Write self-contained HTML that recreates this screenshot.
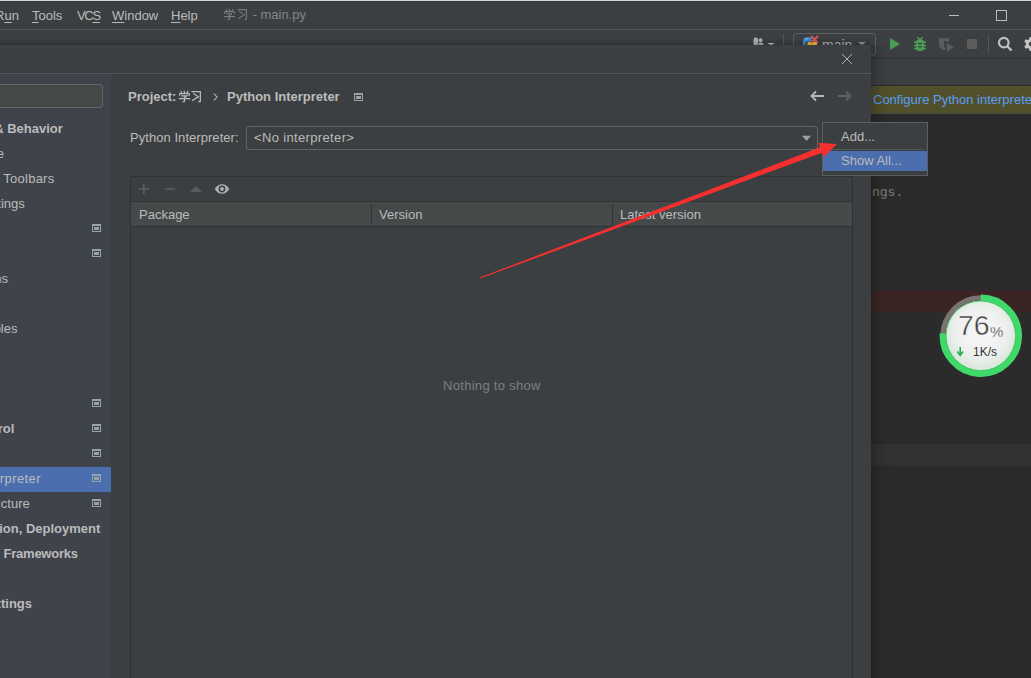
<!DOCTYPE html>
<html><head><meta charset="utf-8">
<style>
*{margin:0;padding:0;box-sizing:border-box}
html,body{width:1031px;height:678px;overflow:hidden;background:#3c3f41;font-family:"Liberation Sans",sans-serif;font-size:13px;color:#bbbbbb}
.a{position:absolute}
.t{position:absolute;white-space:nowrap;line-height:16px;height:16px}
.r{position:absolute;white-space:nowrap;line-height:16px;height:16px;text-align:right;width:300px}
.b{font-weight:bold}
.u{text-decoration:underline;text-underline-offset:2px;text-decoration-thickness:1px}
svg{overflow:visible}
</style></head><body>
<div class="a" style="left:0;top:0;width:1031px;height:1px;background:#d8d8d8"></div>
<div class="a" style="left:0;top:1px;width:1031px;height:1px;background:#37393b"></div>
<div class="t" style="left:-5px;top:7.5px">R<span class="u">u</span>n</div>
<div class="t" style="left:32px;top:7.5px"><span class="u">T</span>ools</div>
<div class="t" style="left:77px;top:7.5px;letter-spacing:-1.3px">VC<span class="u">S</span></div>
<div class="t" style="left:112px;top:7.5px"><span class="u">W</span>indow</div>
<div class="t" style="left:171px;top:7.5px"><span class="u">H</span>elp</div>
<svg class="a" style="left:224.3px;top:9.2px" width="11" height="11" viewBox="0 0 12 12"><g fill="none" stroke="#8b8b8b" stroke-width="1" stroke-linecap="square"><path d="M2.2 0.6 L3.2 2.4 M5.6 0.3 L6.2 2.3 M9.6 0.4 L8.6 2.4 M0.8 4.6 V2.9 H11.2 V4.6 M3.2 5.3 H8.6 L6 7.2 M6 7.2 V11.2 Q6 11.9 4.6 11.6 M0.5 8.4 H11.5" /></g></svg>
<svg class="a" style="left:236.5px;top:9.2px" width="11" height="11" viewBox="0 0 12 12"><g fill="none" stroke="#8b8b8b" stroke-width="1" stroke-linecap="square"><path d="M1.2 0.8 H10.2 V11.3 Q10.2 11.9 8.6 11.5 M3 2.9 L6.4 5.2 M1.8 10.2 L8.2 6.2" /></g></svg>
<div class="t" style="left:252.5px;top:7.0px;color:#838587">- main.py</div>
<div class="a" style="left:949px;top:15px;width:10px;height:1px;background:#bdbdbd"></div>
<div class="a" style="left:996px;top:10px;width:11px;height:11px;border:1px solid #bdbdbd"></div>
<div class="a" style="left:0;top:29px;width:1031px;height:1px;background:#545658"></div>
<svg class="a" style="left:0;top:0" width="1031" height="60">
<g fill="#b4b4b4"><ellipse cx="755.8" cy="41.8" rx="2.4" ry="4.2"/><circle cx="760.6" cy="40.2" r="1.9"/><path d="M758.6 45 V43.6 Q758.6 42.6 760.6 42.6 Q763.4 42.6 763.4 44 V45z"/></g>
<path d="M767 43 h8 l-4 2z" fill="#c8c8c8"/>
<rect x="783" y="34" width="1" height="11" fill="#555"/>
<rect x="793.5" y="33.5" width="82" height="22" rx="3" fill="none" stroke="#5e6060"/>
<path d="M803 45 V41 Q803 37.2 806.5 37.2 H810 Q811.5 37.2 811.5 39 V41.5 H807 Q805.5 41.5 805.5 43 V45z" fill="#3d8fd1"/><circle cx="806.5" cy="39" r="0.7" fill="#cfe3f3"/><path d="M807.5 45 V43 Q807.5 42 809 42 H817 V45z" fill="#ecc43a"/>
<path d="M811 36 l7 7 M818 36 l-7 7" stroke="#e05555" stroke-width="1.8"/>
<path d="M858 42 h8 l-4 3z" fill="#9a9a9a"/>
<path d="M890 38 L900 44 L890 50z" fill="#499c54"/>
<g fill="#499c54"><path d="M917.4 37.2 L920 40 L922.6 37.2" fill="none" stroke="#499c54" stroke-width="1.6"/><path d="M916.2 42 Q916.2 39.6 920 39.6 Q923.8 39.6 923.8 42 V48.5 Q923.8 51 920 51 Q916.2 51 916.2 48.5z"/><rect x="914" y="41.2" width="12" height="1.7"/><rect x="914" y="44.6" width="12" height="1.7"/><rect x="914" y="47.7" width="12" height="1.7"/><rect x="918" y="43" width="4" height="1.2" fill="#3c3f41"/><rect x="918" y="46.2" width="4" height="1.2" fill="#3c3f41"/></g>
<g fill="#5b5b5b"><path d="M938.8 38.2 H949.2 V41.4 H946.3 Q945.2 40.2 944.2 41 V47.6 Q944.6 48.4 945.6 48.2 V49.4 Q944.2 50.4 942.6 49.6 Q938.8 47.8 938.8 44.5z"/><path d="M946.8 43.1 L954 47.4 L946.8 51.7z"/></g>
<rect x="967" y="39" width="10" height="10" fill="#5c5c5c"/>
<rect x="988" y="34" width="1" height="20" fill="#555"/>
<circle cx="1003.8" cy="42.6" r="4.8" fill="none" stroke="#c0c0c0" stroke-width="2.2"/>
<path d="M1007 46 l4.5 4.5" stroke="#c0c0c0" stroke-width="2.4"/>
<g fill="#c4c4c4" transform="translate(1031 44)"><circle r="5.2"/><rect x="-1.6" y="-7" width="3.2" height="14" rx="0.8"/><rect x="-1.6" y="-7" width="3.2" height="14" rx="0.8" transform="rotate(60)"/><rect x="-1.6" y="-7" width="3.2" height="14" rx="0.8" transform="rotate(120)"/></g><circle cx="1031" cy="44" r="2.2" fill="#3c3f41"/>
</svg>
<div class="t" style="left:822px;top:37px;font-size:14px;color:#bbbbbb">main</div>
<div class="a" style="left:0;top:58px;width:1031px;height:1px;background:#323232"></div>
<div class="a" style="left:0;top:85px;width:1031px;height:1px;background:#2b2b2b"></div>
<div class="a" style="left:0;top:86px;width:1031px;height:27px;background:#52502b"></div>
<div class="a" style="left:0;top:113px;width:1031px;height:1px;background:#4a4a48"></div>
<div class="t" style="left:873px;top:92px;color:#589df6">Configure Python interpreter</div>
<div class="a" style="left:0;top:114px;width:1031px;height:564px;background:#2b2b2b"></div>
<div class="a" style="left:0;top:290px;width:1031px;height:22px;background:#3a2524"></div>
<div class="a" style="left:0;top:444px;width:1031px;height:22px;background:#323232"></div>
<div class="t" style="left:872px;top:185px;color:#808080;font-family:'Liberation Mono',monospace;font-size:13px">ngs.</div>
<div class="a" style="left:0;top:38px;width:871px;height:7px;background:linear-gradient(to bottom,rgba(0,0,0,0),rgba(0,0,0,0.2))"></div>
<div class="a" style="left:871px;top:45px;width:20px;height:633px;background:linear-gradient(to right,rgba(0,0,0,0.22),rgba(0,0,0,0.08) 40%,rgba(0,0,0,0))"></div>
<div class="a" style="left:0;top:45px;width:871px;height:633px;background:#3c3f41"></div>
<svg class="a" style="left:842px;top:54px" width="10" height="10"><path d="M0 0 L10 10 M10 0 L0 10" stroke="#b0b0b0" stroke-width="1"/></svg>
<div class="a" style="left:0;top:73px;width:871px;height:1px;background:#545658"></div>
<div class="a" style="left:0;top:74px;width:111px;height:604px;background:#3f434c"></div>
<div class="a" style="left:-10px;top:84px;width:113px;height:24px;background:#45494a;border:1px solid #646464;border-radius:3px"></div>
<div class="a" style="left:0;top:467px;width:111px;height:25px;background:#4b6eaf"></div>
<div class="t" style="left:3.3px;top:171px;letter-spacing:0.25px">Toolbars</div>
<div class="t b" style="left:3.6px;top:546px;letter-spacing:-0.25px">Frameworks</div>
<div class="t" style="left:-0.2px;top:471px;letter-spacing:0.4px">rpreter</div>
<div class="r b" style="left:-237.2px;top:121px">Appearance & Behavior</div>
<div class="r" style="left:-296.1px;top:146px">Appearance</div>
<div class="r" style="left:-275.2px;top:196px">System Settings</div>
<svg class="a" style="left:92px;top:224px" width="9" height="8"><rect x="0" y="0" width="9" height="8" fill="#9aa2a9"/><rect x="1" y="2" width="7" height="5" fill="#3f434c"/><rect x="2" y="3" width="5" height="3" fill="#9aa2a9"/></svg>
<svg class="a" style="left:92px;top:249px" width="9" height="8"><rect x="0" y="0" width="9" height="8" fill="#9aa2a9"/><rect x="1" y="2" width="7" height="5" fill="#3f434c"/><rect x="2" y="3" width="5" height="3" fill="#9aa2a9"/></svg>
<div class="r" style="left:-292.0px;top:271px">Notifications</div>
<div class="r" style="left:-282.5px;top:321px">Path Variables</div>
<svg class="a" style="left:92px;top:399px" width="9" height="8"><rect x="0" y="0" width="9" height="8" fill="#9aa2a9"/><rect x="1" y="2" width="7" height="5" fill="#3f434c"/><rect x="2" y="3" width="5" height="3" fill="#9aa2a9"/></svg>
<div class="r b" style="left:-285.6px;top:421px">Version Control</div>
<svg class="a" style="left:92px;top:424px" width="9" height="8"><rect x="0" y="0" width="9" height="8" fill="#9aa2a9"/><rect x="1" y="2" width="7" height="5" fill="#3f434c"/><rect x="2" y="3" width="5" height="3" fill="#9aa2a9"/></svg>
<svg class="a" style="left:92px;top:449px" width="9" height="8"><rect x="0" y="0" width="9" height="8" fill="#9aa2a9"/><rect x="1" y="2" width="7" height="5" fill="#3f434c"/><rect x="2" y="3" width="5" height="3" fill="#9aa2a9"/></svg>
<svg class="a" style="left:92px;top:474px" width="9" height="8"><rect x="0" y="0" width="9" height="8" fill="#9aa2a9"/><rect x="1" y="2" width="7" height="5" fill="#4b6eaf"/><rect x="2" y="3" width="5" height="3" fill="#9aa2a9"/></svg>
<div class="r" style="left:-270.3px;top:496px">Project Structure</div>
<svg class="a" style="left:92px;top:499px" width="9" height="8"><rect x="0" y="0" width="9" height="8" fill="#9aa2a9"/><rect x="1" y="2" width="7" height="5" fill="#3f434c"/><rect x="2" y="3" width="5" height="3" fill="#9aa2a9"/></svg>
<div class="r b" style="left:-199.7px;top:521px">Build, Execution, Deployment</div>
<div class="r b" style="left:-268.0px;top:596px">Advanced Settings</div>
<div class="t b" style="left:128px;top:89px">Project:</div>
<svg class="a" style="left:178.5px;top:91px" width="11" height="11" viewBox="0 0 12 12"><g fill="none" stroke="#bbbbbb" stroke-width="1.35" stroke-linecap="square"><path d="M2.2 0.6 L3.2 2.4 M5.6 0.3 L6.2 2.3 M9.6 0.4 L8.6 2.4 M0.8 4.6 V2.9 H11.2 V4.6 M3.2 5.3 H8.6 L6 7.2 M6 7.2 V11.2 Q6 11.9 4.6 11.6 M0.5 8.4 H11.5" /></g></svg>
<svg class="a" style="left:190.8px;top:91px" width="11" height="11" viewBox="0 0 12 12"><g fill="none" stroke="#bbbbbb" stroke-width="1.35" stroke-linecap="square"><path d="M1.2 0.8 H10.2 V11.3 Q10.2 11.9 8.6 11.5 M3 2.9 L6.4 5.2 M1.8 10.2 L8.2 6.2" /></g></svg>
<svg class="a" style="left:213px;top:93px" width="5" height="8"><path d="M0.8 0.5 L4 4 L0.8 7.5" fill="none" stroke="#bbbbbb" stroke-width="1.1"/></svg>
<div class="t b" style="left:227px;top:89px">Python Interpreter</div>
<svg class="a" style="left:354px;top:93px" width="9" height="8"><rect x="0" y="0" width="9" height="8" fill="#9aa2a9"/><rect x="1" y="2" width="7" height="5" fill="#3c3f41"/><rect x="2" y="3" width="5" height="3" fill="#9aa2a9"/></svg>
<svg class="a" style="left:810px;top:90px" width="44" height="12">
<path d="M1.5 6 H14 M6 1.5 L1.5 6 L6 10.5" fill="none" stroke="#b8b8b8" stroke-width="1.8"/>
<path d="M28 6 H40.5 M36 1.5 L40.5 6 L36 10.5" fill="none" stroke="#5f6163" stroke-width="1.8"/>
</svg>
<div class="t" style="left:130px;top:130px;letter-spacing:0.05px">Python Interpreter:</div>
<div class="a" style="left:246px;top:126px;width:572px;height:24px;border:1px solid #646464;border-radius:3px"></div>
<div class="t" style="left:254px;top:130px;letter-spacing:0.35px">&lt;No interpreter&gt;</div>
<svg class="a" style="left:802px;top:135px" width="10" height="7"><path d="M0 0.8 H9 L4.5 6z" fill="#a0a0a0"/></svg>
<div class="a" style="left:130px;top:176px;width:723px;height:502px;border:1px solid #323232;border-bottom:none"></div>
<svg class="a" style="left:130px;top:176px" width="110" height="25">
<path d="M13.8 8 V18 M8.8 13 H18.8" stroke="#5c5e60" stroke-width="1.6"/>
<path d="M35 13 H45" stroke="#5c5e60" stroke-width="1.6"/>
<path d="M60 15.9 L66 10 L72 15.9z" fill="#5a5c5e"/>
<path d="M84.8 13 C88 6.6 96.2 6.6 99.2 13 C96.2 19.4 88 19.4 84.8 13z" fill="#afb1b3"/><circle cx="92" cy="13" r="3.4" fill="#3c3f41"/><circle cx="92" cy="13" r="1.9" fill="#afb1b3"/>
</svg>
<div class="a" style="left:131px;top:201px;width:721px;height:1px;background:#323232"></div>
<div class="a" style="left:131px;top:202px;width:721px;height:24px;background:#45494a"></div>
<div class="a" style="left:131px;top:226px;width:721px;height:1px;background:#323232"></div>
<div class="a" style="left:371px;top:204px;width:1px;height:21px;background:#323232"></div>
<div class="a" style="left:612px;top:204px;width:1px;height:21px;background:#323232"></div>
<div class="t" style="left:139px;top:206.5px">Package</div>
<div class="t" style="left:379px;top:206.5px">Version</div>
<div class="t" style="left:620px;top:206.5px">Latest version</div>
<div class="t" style="left:443px;top:378px;color:#7d8082;letter-spacing:0.3px">Nothing to show</div>
<div class="a" style="left:822px;top:122px;width:106px;height:54px;background:#3c3f41;border:1px solid #5e6060"></div>
<div class="t" style="left:841px;top:129px">Add...</div>
<div class="a" style="left:823px;top:149px;width:101px;height:1px;background:#515658"></div>
<div class="a" style="left:823px;top:151px;width:104px;height:20px;background:#4b6eaf"></div>
<div class="t" style="left:841px;top:153px">Show All...</div>
<svg class="a" style="left:0;top:0" width="1031" height="678"><polygon points="479.79,277.44 820.07,147.26 818.38,142.77 837.00,144.00 823.79,157.18 822.10,152.69 480.21,278.56" fill="#f6302f"/></svg>
<svg class="a" style="left:0;top:0" width="1031" height="678">
<defs><radialGradient id="g1" cx="50%" cy="45%" r="50%"><stop offset="0" stop-color="#f7f7f7"/><stop offset="0.7" stop-color="#eef0ee"/><stop offset="1" stop-color="#dce8dc"/></radialGradient></defs>
<circle cx="980.8" cy="335.8" r="35.300000000000004" fill="url(#g1)"/>
<circle cx="980.8" cy="335.8" r="38.0" fill="none" stroke="#7a7372" stroke-width="4.9"/>
<path d="M980.8 297.8 A38.0 38.0 0 1 1 942.87 333.41" fill="none" stroke="#3fd96a" stroke-width="6.4"/>
<circle cx="980.8" cy="335.8" r="34.800000000000004" fill="none" stroke="#2fc45a" stroke-width="0.8"/>
<path d="M960.2 347 V355 M957.3 351.5 L960.2 355.5 L963.1 351.5" fill="none" stroke="#1fb14f" stroke-width="1.6"/>
</svg>
<div class="a" style="left:958px;top:310px;font-size:28.5px;line-height:30px;color:#383838;white-space:nowrap;-webkit-text-stroke:0.55px #eceeec">76</div>
<div class="a" style="left:990px;top:324px;font-size:15px;line-height:16px;color:#3a3a3a;white-space:nowrap;-webkit-text-stroke:0.3px #eceeec">%</div>
<div class="a" style="left:973px;top:345px;font-size:12px;line-height:14px;color:#333333;white-space:nowrap">1K/s</div>
</body></html>
